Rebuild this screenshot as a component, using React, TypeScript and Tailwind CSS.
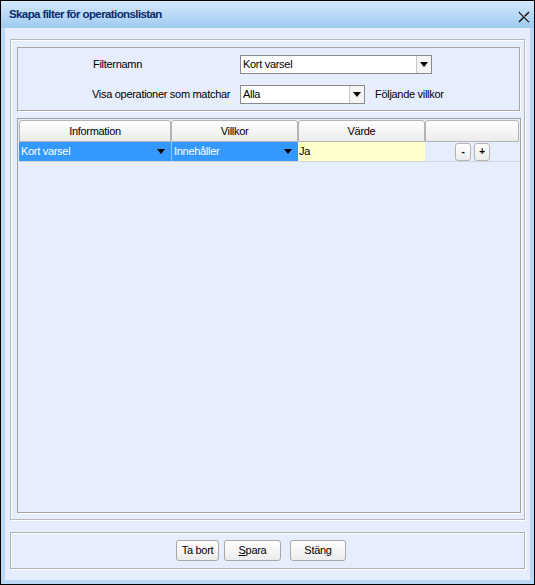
import { ReactNode } from 'react';

const font = { fontFamily: '"Liberation Sans", Arial, sans-serif' };

function Select({ value, width }: { value: string; width: string }) {
  return (
    <div className={`flex h-[19px] ${width} border border-[#8a8a8a] bg-white`}>
      <div className="flex-1 pl-[2px] text-[11px] leading-[17px] tracking-[-0.3px] text-black">{value}</div>
      <div className="flex w-[15px] items-center justify-center border-l border-[#c8c8c8] bg-[#f4f4f4]">
        <span className="block h-0 w-0 border-x-[4px] border-t-[5px] border-x-transparent border-t-black" />
      </div>
    </div>
  );
}

function HeaderCell({ children, width }: { children?: ReactNode; width: string }) {
  return (
    <div
      className={`${width} flex h-[22px] items-center justify-center rounded-t-[3px] border border-[#b4b4b4] bg-gradient-to-b from-white to-[#ebebeb] text-[11px] tracking-[-0.3px] text-black`}
    >
      {children}
    </div>
  );
}

function SmallButton({ label }: { label: string }) {
  return (
    <div className="flex h-[18px] w-[16px] items-center justify-center rounded-[3px] border border-[#b4b4b4] bg-gradient-to-b from-white to-[#ececec] text-[10px] font-bold text-black">
      {label}
    </div>
  );
}

function Button({ children, width }: { children: ReactNode; width: string }) {
  return (
    <div
      className={`${width} flex h-[21px] items-center justify-center rounded-[3px] border border-[#a8a8a8] bg-gradient-to-b from-white to-[#ececec] text-[11px] tracking-[-0.3px] text-black`}
    >
      {children}
    </div>
  );
}

export default function App() {
  return (
    <div className="h-[585px] w-[535px] bg-black p-px" style={font}>
      <div className="flex h-full flex-col border-x-[4px] border-b-[4px] border-[#bcd8f5] bg-[#bcd8f5]">
        {/* title bar */}
        <div className="-mx-[4px] flex h-[27px] items-center justify-between bg-gradient-to-b from-[#d3e9fc] to-[#9fcaf1] pl-[8px] pr-[4px]">
          <span className="text-[11.5px] font-bold tracking-[-0.6px] text-[#0b2a6a]">Skapa filter för operationslistan</span>
          <svg width="12" height="12" viewBox="0 0 12 12" className="mt-[4px]">
            <path d="M1 1 L11 11 M11 1 L1 11" stroke="#1a1a1a" strokeWidth="1.6" />
            <path d="M2 1 L11 10" stroke="#fff" strokeWidth="0.6" />
          </svg>
        </div>

        {/* body */}
        <div className="flex flex-1 flex-col bg-[#e6edfc] px-[5px] pb-[10px] pt-[11px] text-[11px] tracking-[-0.3px]">
          {/* outer group */}
          <div className="flex h-[481px] flex-col gap-[7px] border border-[#b8b8b8] pb-[6px] pl-[6px] pr-[3px] pt-[7px] shadow-[inset_1px_1px_0_#fff,1px_1px_0_#fff]">
            {/* criteria box */}
            <div className="mr-px flex h-[64px] flex-col gap-[11px] border border-[#a8a8a8] pt-[7px] shadow-[1px_1px_0_#fff]">
              <div className="flex items-center">
                <span className="w-[222px] pl-[75px] text-black">Filternamn</span>
                <Select value="Kort varsel" width="w-[192px]" />
              </div>
              <div className="flex items-center">
                <span className="w-[222px] pl-[74px] text-black">Visa operationer som matchar</span>
                <Select value="Alla" width="w-[125px]" />
                <span className="pl-[10px] text-black">Följande villkor</span>
              </div>
            </div>

            {/* table */}
            <div className="flex-1 border border-[#a0a0a0] p-px shadow-[1px_1px_0_#fff]">
              <div className="flex">
                <HeaderCell width="w-[152px]">Information</HeaderCell>
                <HeaderCell width="w-[127px]">Villkor</HeaderCell>
                <HeaderCell width="w-[127px]">Värde</HeaderCell>
                <HeaderCell width="flex-1" />
              </div>
              <div className="flex h-[20px] border-b border-[#d0d4dc]">
                <div className="flex w-[152px] items-center justify-between bg-[#3399ff] pl-[2px] pr-[6px] text-white">
                  <span>Kort varsel</span>
                  <span className="block h-0 w-0 border-x-[4px] border-t-[5px] border-x-transparent border-t-black" />
                </div>
                <div className="flex w-[127px] items-center justify-between border-l border-[#8cc4ff] bg-[#3399ff] pl-[2px] pr-[6px] text-white">
                  <span>Innehåller</span>
                  <span className="block h-0 w-0 border-x-[4px] border-t-[5px] border-x-transparent border-t-black" />
                </div>
                <div className="flex w-[127px] items-center bg-[#ffffcc] pl-px text-black">Ja</div>
                <div className="flex flex-1 items-center gap-[3px] pl-[30px]">
                  <SmallButton label="-" />
                  <SmallButton label="+" />
                </div>
              </div>
            </div>
          </div>

          {/* bottom bar */}
          <div className="mt-[12px] flex h-[37px] items-center justify-center border border-[#b0b0b0] pr-[13px] shadow-[inset_1px_1px_0_#fff,1px_1px_0_#fff]">
            <div className="flex items-center">
              <Button width="w-[43px]">Ta bort</Button>
              <div className="w-[5px]" />
              <Button width="w-[57px]">
                <span>
                  <span className="underline">S</span>para
                </span>
              </Button>
              <div className="w-[9px]" />
              <Button width="w-[56px]">
                <span>
                  Stän<span className="underline">g</span>
                </span>
              </Button>
            </div>
          </div>
        </div>
      </div>
    </div>
  );
}
